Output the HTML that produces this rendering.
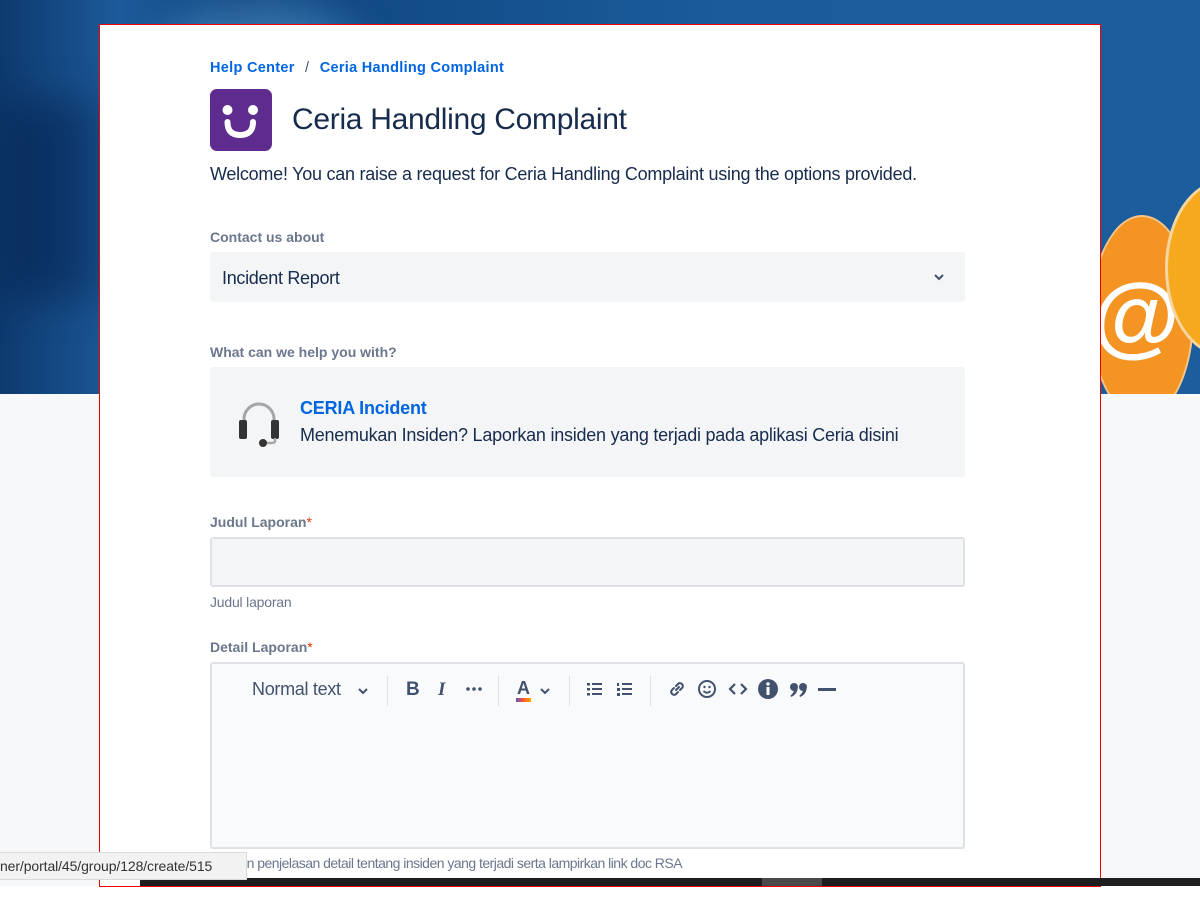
<!DOCTYPE html>
<html><head><meta charset="utf-8"><style>
body{margin:0;width:1200px;height:912px;overflow:hidden;position:relative;background:#fff;font-family:"Liberation Sans",Arial,sans-serif;}
.banner{position:absolute;left:0;top:0;width:1200px;height:394px;overflow:hidden;background:linear-gradient(90deg,#0d3a6e 0%,#1d5a9a 10%,#0f447d 20%,#1a5b9b 60%,#1b5d9d 100%);}
.below{position:absolute;left:0;top:394px;width:1200px;height:492px;background:#f7f8f9;}
.card{position:absolute;left:99px;top:24px;width:1000px;height:861px;border:1px solid #e00;background:#fff;}
.a{position:absolute;}
.lbl{font-size:14px;font-weight:bold;color:#6b778c;}
.req{color:#de350b;font-weight:normal}
.bar{position:absolute;left:140px;top:878px;width:1060px;height:8px;background:#1e1e1e;}
</style></head><body>
<div class="banner">
 <div class="a" style="left:1090px;top:215px;width:100px;height:200px;border-radius:50%;background:#f39423;border:2px solid #f7c58a"></div>
 <div class="a" style="left:1092px;top:265px;font-size:90px;color:#fff;font-weight:bold">@</div>
 <div class="a" style="left:1165px;top:180px;width:110px;height:170px;border-radius:50%;background:#f6a91c;border:3px solid #f6d6a0"></div>
 <div class="a" style="left:160px;top:0;width:200px;height:120px;border-radius:50%;background:rgba(120,190,240,.35);filter:blur(20px)"></div>
 <div class="a" style="left:0;top:100px;width:100px;height:200px;background:rgba(0,20,60,.4);filter:blur(20px)"></div>
</div>
<div class="below"></div>
<div class="card">
 <div class="a" style="left:110px;top:35px;font-size:14.5px;font-weight:bold;color:#0065e0;letter-spacing:0.3px">Help Center <span style="color:#42526e;font-weight:normal;margin:0 6px">/</span> Ceria Handling Complaint</div>
 <div class="a" style="left:110px;top:64px;width:62px;height:62px;border-radius:7px;background:#5e2b8f">
  <svg width="62" height="62"><circle cx="17.5" cy="21" r="5" fill="#fff"/><circle cx="43" cy="21" r="5" fill="#fff"/><path d="M17.5 33 Q17.5 46 30 46 Q43 46 43 33" stroke="#fff" stroke-width="6" fill="none" stroke-linecap="round"/></svg>
 </div>
 <div class="a" style="left:192px;top:78px;font-size:30px;color:#172b4d;letter-spacing:-0.3px">Ceria Handling Complaint</div>
 <div class="a" style="left:110px;top:139px;font-size:18px;color:#172b4d;letter-spacing:-0.25px">Welcome! You can raise a request for Ceria Handling Complaint using the options provided.</div>
 <div class="a lbl" style="left:110px;top:204px">Contact us about</div>
 <div class="a" style="left:110px;top:227px;width:755px;height:50px;background:#f4f5f7;border-radius:3px">
  <div class="a" style="left:12px;top:16px;font-size:18px;color:#172b4d;letter-spacing:-0.3px">Incident Report</div>
  <svg class="a" style="left:722px;top:18px" width="14" height="14"><path d="M3 5l4 4 4-4" stroke="#42526e" stroke-width="2" fill="none"/></svg>
 </div>
 <div class="a lbl" style="left:110px;top:319px">What can we help you with?</div>
 <div class="a" style="left:110px;top:342px;width:755px;height:110px;background:#f4f5f7;border-radius:3px">
  <svg class="a" style="left:28px;top:34px" width="46" height="50"><path d="M6 22 V18 A15 15 0 0 1 36 18 V22" stroke="#a5a5a5" stroke-width="3" fill="none"/><rect x="1" y="19" width="8" height="19" rx="2" fill="#333"/><rect x="33" y="19" width="8" height="19" rx="2" fill="#333"/><path d="M37 37 V40 Q37 42 33 42 H26" stroke="#a5a5a5" stroke-width="2.5" fill="none"/><circle cx="25" cy="42" r="4" fill="#333"/></svg>
  <div class="a" style="left:90px;top:31px;font-size:18px;font-weight:bold;color:#0065e0;letter-spacing:-0.2px">CERIA Incident</div>
  <div class="a" style="left:90px;top:58px;font-size:18px;color:#172b4d;letter-spacing:-0.24px">Menemukan Insiden? Laporkan insiden yang terjadi pada aplikasi Ceria disini</div>
 </div>
 <div class="a lbl" style="left:110px;top:489px">Judul Laporan<span class="req">*</span></div>
 <div class="a" style="left:110px;top:512px;width:751px;height:46px;background:#f4f5f7;border:2px solid #dfe1e6;border-radius:3px"></div>
 <div class="a" style="left:110px;top:569px;font-size:14px;color:#6b778c;letter-spacing:-0.2px">Judul laporan</div>
 <div class="a lbl" style="left:110px;top:614px">Detail Laporan<span class="req">*</span></div>
 <div class="a" style="left:110px;top:637px;width:751px;height:183px;background:#f9fafb;border:2px solid #dfe1e6;border-radius:3px">
  <div class="a" style="left:40px;top:15px;font-size:18px;color:#42526e;letter-spacing:-0.3px">Normal text</div>
  <svg class="a" style="left:144px;top:20px" width="14" height="14"><path d="M3 5l4 4 4-4" stroke="#42526e" stroke-width="2" fill="none"/></svg>
  <div class="a" style="left:175px;top:12px;width:1px;height:30px;background:#dfe1e6"></div>
  <div class="a" style="left:194px;top:15px;font-size:19px;font-weight:bold;color:#42526e">B</div>
  <div class="a" style="left:226px;top:15px;font-size:19px;font-style:italic;font-family:'Liberation Serif',serif;font-weight:bold;color:#42526e">I</div>
  <svg class="a" style="left:253px;top:20px" width="18" height="10" fill="#42526e"><circle cx="3" cy="5" r="1.8"/><circle cx="9" cy="5" r="1.8"/><circle cx="15" cy="5" r="1.8"/></svg>
  <div class="a" style="left:286px;top:12px;width:1px;height:30px;background:#dfe1e6"></div>
  <div class="a" style="left:305px;top:14px;font-size:18px;color:#42526e;font-weight:bold">A</div>
  <div class="a" style="left:304px;top:34px;width:15px;height:4px;background:linear-gradient(90deg,#6554c0,#ff5630,#ffab00)"></div>
  <svg class="a" style="left:326px;top:20px" width="14" height="14"><path d="M3 5l4 4 4-4" stroke="#42526e" stroke-width="2" fill="none"/></svg>
  <div class="a" style="left:357px;top:12px;width:1px;height:30px;background:#dfe1e6"></div>
  <svg class="a" style="left:374px;top:16px" width="18" height="18" fill="#42526e"><rect x="1" y="3" width="3" height="2.5"/><rect x="1" y="8" width="3" height="2.5"/><rect x="1" y="13" width="3" height="2.5"/><rect x="6" y="3" width="10" height="2"/><rect x="6" y="8" width="10" height="2"/><rect x="6" y="13" width="10" height="2"/></svg>
  <svg class="a" style="left:404px;top:16px" width="18" height="18" fill="#42526e"><rect x="1" y="3" width="2" height="3"/><rect x="1" y="8" width="3" height="3"/><rect x="1" y="13" width="3" height="3"/><rect x="6" y="3" width="10" height="2"/><rect x="6" y="8" width="10" height="2"/><rect x="6" y="13" width="10" height="2"/></svg>
  <div class="a" style="left:438px;top:12px;width:1px;height:30px;background:#dfe1e6"></div>
  <svg class="a" style="left:455px;top:15px" width="20" height="20"><path d="M9 11 L12 8 M7 9 L4.5 11.5 A3 3 0 0 0 8.5 15.5 L11 13 M13 11 L15.5 8.5 A3 3 0 0 0 11.5 4.5 L9 7" stroke="#42526e" stroke-width="2" fill="none" stroke-linecap="round"/></svg>
  <svg class="a" style="left:485px;top:15px" width="20" height="20"><circle cx="10" cy="10" r="8" stroke="#42526e" stroke-width="2" fill="none"/><circle cx="7.5" cy="8" r="1.2" fill="#42526e"/><circle cx="12.5" cy="8" r="1.2" fill="#42526e"/><path d="M6.5 12 Q10 15.5 13.5 12" stroke="#42526e" stroke-width="1.8" fill="none"/></svg>
  <svg class="a" style="left:515px;top:15px" width="22" height="20"><path d="M8 5 L3 10 L8 15 M14 5 L19 10 L14 15" stroke="#42526e" stroke-width="2.2" fill="none"/></svg>
  <svg class="a" style="left:545px;top:14px" width="22" height="22"><circle cx="11" cy="11" r="10" fill="#42526e"/><rect x="9.5" y="9" width="3" height="8" fill="#fff"/><circle cx="11" cy="6" r="1.7" fill="#fff"/></svg>
  <svg class="a" style="left:576px;top:15px" width="22" height="22" fill="#42526e"><circle cx="6" cy="8" r="4"/><path d="M9.5 8 Q10 15 3 18 L2.5 16.5 Q6 14 6 10 Z"/><circle cx="15" cy="8" r="4"/><path d="M18.5 8 Q19 15 12 18 L11.5 16.5 Q15 14 15 10 Z"/></svg>
  <div class="a" style="left:606px;top:24px;width:18px;height:3px;background:#42526e"></div>
 </div>
 <div class="a" style="left:110px;top:830px;font-size:14px;color:#6b778c;letter-spacing:-0.52px">Berikan penjelasan detail tentang insiden yang terjadi serta lampirkan link doc RSA</div>
</div>
<div class="bar"><div class="a" style="left:622px;top:0;width:60px;height:8px;background:#4a4a4a"></div></div>
<div class="a" style="left:0;top:852px;width:246px;height:26px;background:#f2f2f2;border:1px solid #dadada;border-left:none;font-size:14px;color:#333;line-height:26px;overflow:hidden;white-space:nowrap;letter-spacing:-0.1px">ner/portal/45/group/128/create/515</div>
</body></html>
